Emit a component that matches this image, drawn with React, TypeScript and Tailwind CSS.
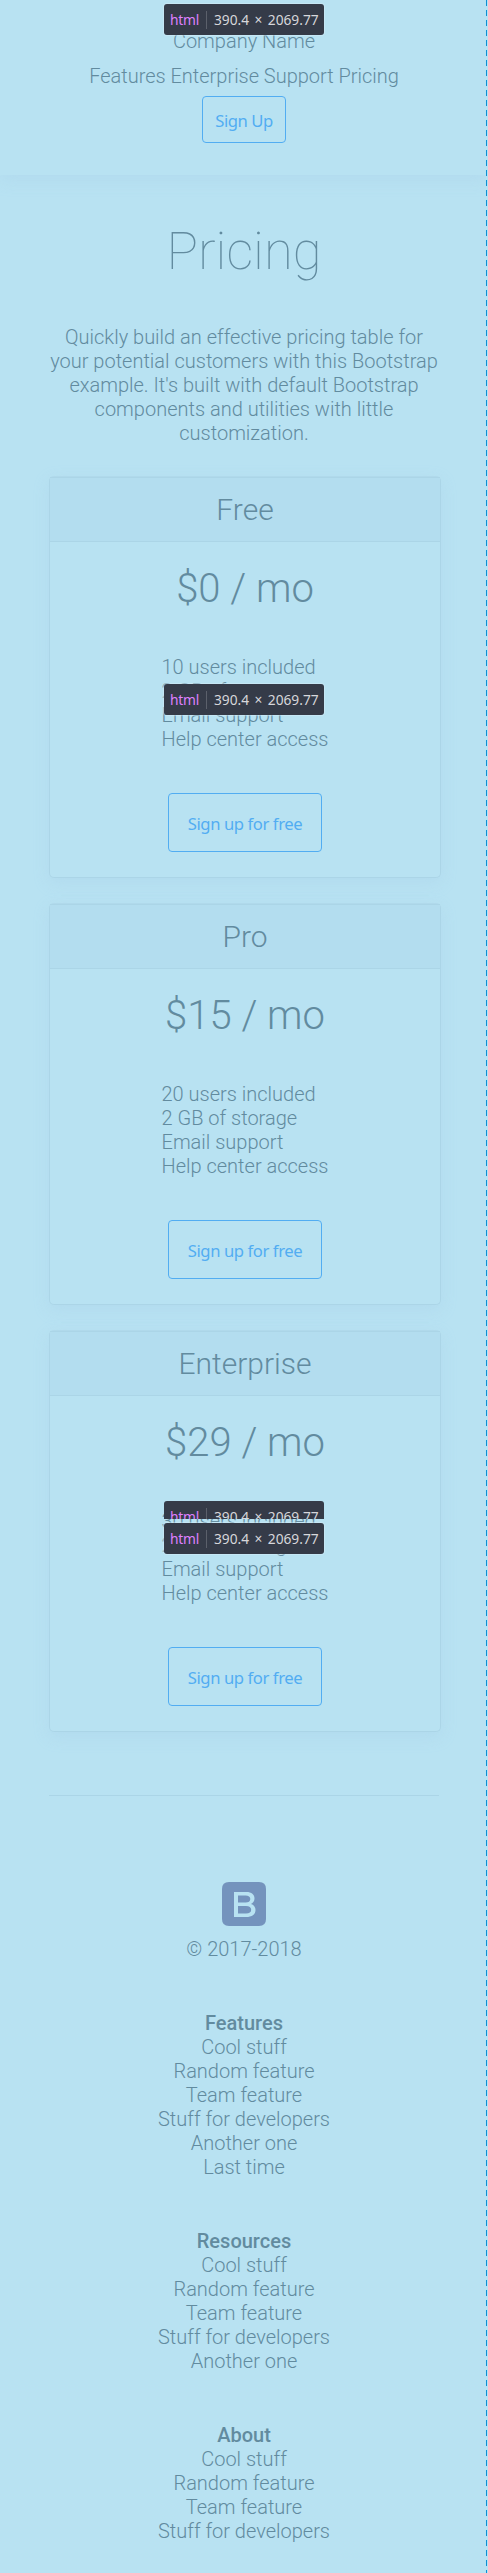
import React from "react";

const plans = [
  { name: "Free", price: "$0 / mo", features: ["10 users included", "2 GB of storage", "Email support", "Help center access"] },
  { name: "Pro", price: "$15 / mo", features: ["20 users included", "2 GB of storage", "Email support", "Help center access"] },
  { name: "Enterprise", price: "$29 / mo", features: ["30 users included", "2 GB of storage", "Email support", "Help center access"] },
];

const columns = [
  { title: "Features", links: ["Cool stuff", "Random feature", "Team feature", "Stuff for developers", "Another one", "Last time"] },
  { title: "Resources", links: ["Cool stuff", "Random feature", "Team feature", "Stuff for developers", "Another one"] },
  { title: "About", links: ["Cool stuff", "Random feature", "Team feature", "Stuff for developers"] },
];

function SizeTag({ position, clipped = false }: { position: string; clipped?: boolean }) {
  return (
    <div className={`absolute left-[164px] w-[160px] overflow-hidden ${clipped ? "h-[18px] rounded-t-[3px]" : "h-[31px] rounded-[3px] shadow-[0_0_1px_1px_rgba(215,238,250,0.5)]"} ${position}`}>
      <div className="flex h-[31px] items-center bg-[#353b48] pt-px pl-[6px] font-['Noto_Sans',sans-serif] text-[13.75px] font-normal text-[#d7d7db]">
        <span className="w-[28px] tracking-[-0.2px] text-[#df80ff]">html</span>
        <span className="ml-[8px] h-[18px] w-px bg-[#5b606b]" />
        <span className="ml-[7px] whitespace-nowrap [word-spacing:1.8px]">390.4 × 2069.77</span>
      </div>
    </div>
  );
}

function PlanCard({ name, price, features }: (typeof plans)[number]) {
  return (
    <section className="flex h-[402px] w-[392px] flex-col items-center rounded-[5px] border border-[#abd5e7] border-t-[#b0d9eb] shadow-[0_5px_15px_rgba(160,200,230,0.28)]">
      <h2 className="h-[65px] w-full border-y border-[#abd5e7] bg-[#b3ddef] pt-[14px] text-center text-[30px] leading-[36px]">{name}</h2>
      <p className="mt-[23px] text-[40px] leading-[48px]">{price}</p>
      <ul className="mt-[42px] w-[167px] whitespace-nowrap">
        {features.map((f) => (
          <li key={f}>{f}</li>
        ))}
      </ul>
      <button className="mt-[42px] h-[59px] w-[154px] rounded-[4px] border border-[#52adf2] pt-[2px] font-['Noto_Sans',sans-serif] text-[16.67px] font-normal tracking-[-0.42px] text-[#52adf2]">Sign up for free</button>
    </section>
  );
}

export default function App() {
  return (
    <div className="relative h-[2573px] w-[488px] overflow-hidden bg-[#b8e2f2] font-['Roboto',sans-serif] text-[20px] leading-[24px] font-light text-[#628b9f]">
      <header className="flex h-[175px] flex-col items-center pt-[29px] shadow-[0_5px_15px_rgba(160,200,230,0.28)]">
        <p>Company Name</p>
        <nav className="mt-[11px] flex gap-[4.7px]">
          <span>Features</span>
          <span>Enterprise</span>
          <span>Support</span>
          <span>Pricing</span>
        </nav>
        <button className="mt-[8px] h-[47px] w-[84px] rounded-[4px] border border-[#52adf2] pt-[2px] font-['Noto_Sans',sans-serif] text-[16.67px] font-normal tracking-[-0.45px] text-[#52adf2]">Sign Up</button>
      </header>
      <h1 className="mt-[43px] text-center text-[52.6px] leading-[66px] font-thin">Pricing</h1>
      <p className="mx-auto mt-[41px] w-[392px] text-center">
        Quickly build an effective pricing table for your potential customers with this Bootstrap example. It's built with default Bootstrap components and utilities with little customization.
      </p>
      <main className="mt-[31px] ml-[49px] flex flex-col gap-[25px]">
        {plans.map((p) => (
          <PlanCard key={p.name} {...p} />
        ))}
      </main>
      <footer className="mt-[63px] ml-[49px] flex w-[390px] flex-col items-center border-t border-[#abd5e7] text-center">
        <svg className="mt-[86px] h-[44px] w-[44px]" viewBox="0 0 44 44" fill="none">
          <path fillRule="evenodd" fill="#7493bd" d="M7 0H37Q44 0 44 7V37Q44 44 37 44H7Q0 44 0 37V7Q0 0 7 0ZM12 10V35H24C30 35 33.500 32.500 33.500 28C33.500 24.800 31.800 22.700 29 21.900C31.200 21 32.500 18.900 32.500 16.500C32.500 12.400 29.500 10 24.500 10ZM16 13.500H23.500C26.600 13.500 28.300 14.700 28.300 17C28.300 19.300 26.500 20.600 23.500 20.600H16ZM16 24H24C27.400 24 29.200 25.300 29.200 27.800C29.200 30.300 27.400 31.500 24 31.500H16Z" />
        </svg>
        <p className="mt-[11px]">© 2017-2018</p>
        <div className="mt-[50px] flex flex-col gap-[50px]">
          {columns.map((c) => (
            <div key={c.title}>
              <h3 className="font-medium">{c.title}</h3>
              <ul>
                {c.links.map((l) => (
                  <li key={l}>{l}</li>
                ))}
              </ul>
            </div>
          ))}
        </div>
      </footer>
      <SizeTag position="top-[4px]" />
      <SizeTag position="top-[684px]" />
      <SizeTag position="top-[1501px]" clipped />
      <SizeTag position="top-[1523px]" />
      <div className="absolute top-0 left-[486px] h-full w-px bg-[repeating-linear-gradient(to_bottom,#0b8fd3_0_6px,#b8e2f2_6px_10px)]" />
    </div>
  );
}
